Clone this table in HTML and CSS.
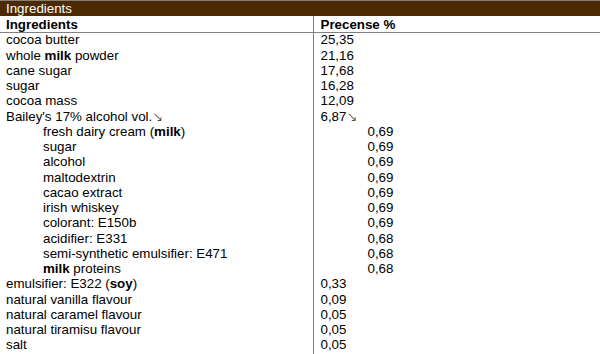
FILE: index.html
```html
<!DOCTYPE html>
<html>
<head>
<meta charset="utf-8">
<link rel="stylesheet" href="styles.css">
</head>
<body>
<div class="title">Ingredients</div>
<table class="ing">
  <colgroup><col class="col1"><col class="col2"></colgroup>
  <thead>
    <tr><th class="c1">Ingredients</th><th class="c2">Precense %</th></tr>
  </thead>
  <tbody>
    <tr><td class="c1">cocoa butter</td><td class="c2">25,35</td></tr>
    <tr><td class="c1">whole <b>milk</b> powder</td><td class="c2">21,16</td></tr>
    <tr><td class="c1">cane sugar</td><td class="c2">17,68</td></tr>
    <tr><td class="c1">sugar</td><td class="c2">16,28</td></tr>
    <tr><td class="c1">cocoa mass</td><td class="c2">12,09</td></tr>
    <tr><td class="c1">Bailey's 17% alcohol vol.<span class="arr">↘</span></td><td class="c2">6,87<span class="arr">↘</span></td></tr>
    <tr class="sub"><td class="c1">fresh dairy cream (<b>milk</b>)</td><td class="c2">0,69</td></tr>
    <tr class="sub"><td class="c1">sugar</td><td class="c2">0,69</td></tr>
    <tr class="sub"><td class="c1">alcohol</td><td class="c2">0,69</td></tr>
    <tr class="sub"><td class="c1">maltodextrin</td><td class="c2">0,69</td></tr>
    <tr class="sub"><td class="c1">cacao extract</td><td class="c2">0,69</td></tr>
    <tr class="sub"><td class="c1">irish whiskey</td><td class="c2">0,69</td></tr>
    <tr class="sub"><td class="c1">colorant: E150b</td><td class="c2">0,69</td></tr>
    <tr class="sub"><td class="c1">acidifier: E331</td><td class="c2">0,68</td></tr>
    <tr class="sub"><td class="c1">semi-synthetic emulsifier: E471</td><td class="c2">0,68</td></tr>
    <tr class="sub"><td class="c1"><b>milk</b> proteins</td><td class="c2">0,68</td></tr>
    <tr><td class="c1">emulsifier: E322 (<b>soy</b>)</td><td class="c2">0,33</td></tr>
    <tr><td class="c1">natural vanilla flavour</td><td class="c2">0,09</td></tr>
    <tr><td class="c1">natural caramel flavour</td><td class="c2">0,05</td></tr>
    <tr><td class="c1">natural tiramisu flavour</td><td class="c2">0,05</td></tr>
    <tr><td class="c1">salt</td><td class="c2">0,05</td></tr>
  </tbody>
</table>
</body>
</html>
```
FILE: styles.css
```css
html, body {
  margin: 0;
  padding: 0;
  background: #fff;
}
body {
  font-family: "Liberation Sans", Arial, sans-serif;
  font-size: 13.333px;
  color: #000;
}
.title {
  border-top: 1px solid #808080;
  background: #4d2900;
  color: #fff;
  height: 15px;
  line-height: 15px;
  padding-left: 6px;
}
.ing {
  width: 100%;
  table-layout: fixed;
  border-collapse: collapse;
  border-spacing: 0;
}
.col1 {
  width: 313px;
}
.ing th, .ing td {
  padding: 0;
  text-align: left;
  vertical-align: top;
  white-space: nowrap;
}
.ing th {
  font-weight: bold;
  line-height: 15.25px;
  padding-top: 1px;
  border-bottom: 1px solid #808080;
}
.ing td {
  line-height: 13.25px;
  padding-bottom: 2px;
}
.ing .c1 {
  padding-left: 6px;
  border-right: 1px solid #808080;
}
.ing .c2 {
  padding-left: 7px;
}
.ing .sub .c1 {
  padding-left: 43px;
}
.ing .sub .c2 {
  padding-left: 54px;
}
.arr {
  font-family: "DejaVu Sans", sans-serif;
  font-size: 13px;
  font-weight: 200;
  color: #222;
}
```
